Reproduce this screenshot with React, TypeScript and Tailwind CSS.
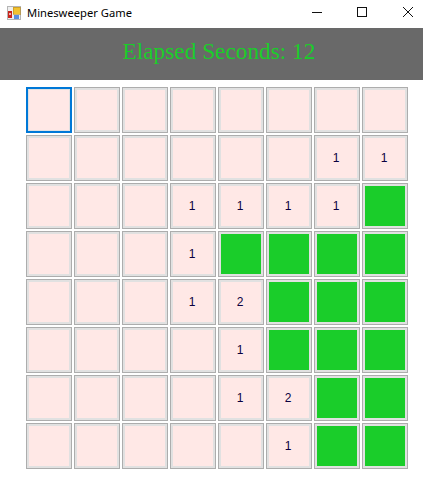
const ROWS: string[] = [
  '........',
  '......11',
  '...1111G',
  '...1GGGG',
  '...12GGG',
  '....1GGG',
  '....12GG',
  '.....1GG',
];

function AppIcon() {
  return (
    <svg className="mb-[3px]" width="14" height="14" viewBox="0 0 14 14" shapeRendering="crispEdges">
      <rect x="0.5" y="0.5" width="13" height="13" fill="#efefef" stroke="#b5b5b5" />
      <rect x="6" y="1" width="7" height="7" fill="#f2c230" stroke="#b98a1c" strokeWidth="0.6" />
      <rect x="1" y="5" width="4" height="7" fill="#c8241c" />
      <rect x="2" y="7" width="2" height="2" fill="#f2b0a8" />
      <rect x="7" y="9" width="5" height="4" fill="#5a8fe0" />
    </svg>
  );
}

function Cell({ value, focused }: { value: string; focused: boolean }) {
  if (value === 'G') {
    return (
      <div className="h-[46px] w-[46px] border border-[#adadad] bg-[#e1e1e1] p-[2px]">
        <div className="h-full w-full bg-[#1acd2a]" />
      </div>
    );
  }
  return (
    <div
      className={
        focused
          ? 'h-[46px] w-[46px] border-2 border-[#0078d7] bg-[#e1e1e1] p-[1px]'
          : 'h-[46px] w-[46px] border border-[#adadad] bg-[#e1e1e1] p-[2px]'
      }
    >
      <div className="flex h-full w-full items-center justify-center bg-[#ffe8e6] pr-[2px] text-[12px] leading-none text-[#0a0040]">
        {value === '.' ? '' : value}
      </div>
    </div>
  );
}

export default function App() {
  return (
    <div className="h-[477px] w-[423px] overflow-hidden bg-white font-['Liberation_Sans',sans-serif]">
      <div className="flex h-[28px] items-center pl-[7px] pr-[10px]">
        <AppIcon />
        <span className="mb-[2px] ml-[6px] font-['Noto_Sans',sans-serif] text-[11.2px] text-black">Minesweeper Game</span>
        <div className="mb-[4px] ml-auto flex items-center">
          <svg width="10" height="10" viewBox="0 0 10 10" shapeRendering="crispEdges">
            <line x1="0" y1="5.5" x2="10" y2="5.5" stroke="#111" />
          </svg>
          <svg className="ml-[35px]" width="10" height="10" viewBox="0 0 10 10" shapeRendering="crispEdges">
            <rect x="0.5" y="0.5" width="9" height="9" fill="none" stroke="#111" />
          </svg>
          <svg className="ml-[36px]" width="10" height="10" viewBox="0 0 10 10">
            <path d="M0 0L10 10M10 0L0 10" fill="none" stroke="#111" strokeWidth="1" />
          </svg>
        </div>
      </div>
      <div className="flex h-[52px] items-center justify-center bg-[#696969] pb-[5px] pl-[15px] font-['Liberation_Serif',serif] text-[23.3px] text-[#1acd2a]">
        Elapsed Seconds: 12
      </div>
      <div className="grid grid-cols-[repeat(8,46px)] gap-[2px] pl-[26px] pt-[7px]">
        {ROWS.map((row, r) =>
          row.split('').map((value, c) => (
            <Cell key={`${r}-${c}`} value={value} focused={r === 0 && c === 0} />
          )),
        )}
      </div>
    </div>
  );
}
